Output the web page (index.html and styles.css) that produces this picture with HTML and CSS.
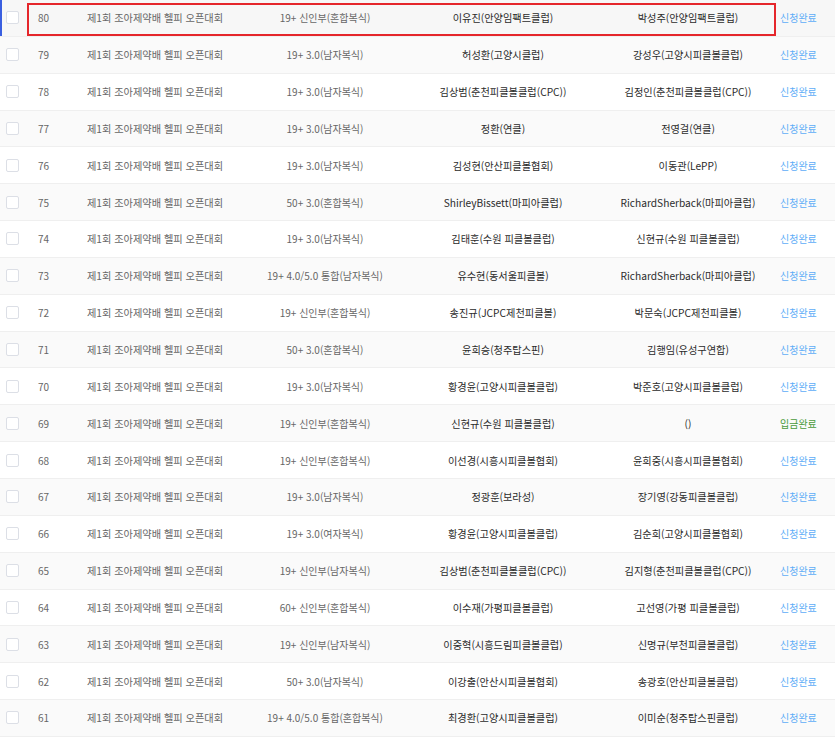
FILE: index.html
```html
<!DOCTYPE html>
<html lang="ko">
<head>
<meta charset="utf-8">
<title>신청 목록</title>
<link rel="stylesheet" href="styles.css">
</head>
<body>
<div class="table">
  <div class="row hover"><span class="cell chk"><span class="box"></span></span><span class="cell num">80</span><span class="cell name">제1회 조아제약배 헬피 오픈대회</span><span class="cell ev">19+ 신인부(혼합복식)</span><span class="cell p">이유진(안양임팩트클럽)</span><span class="cell p">박성주(안양임팩트클럽)</span><span class="cell st">신청완료</span><div class="mark"></div></div>
  <div class="row odd"><span class="cell chk"><span class="box"></span></span><span class="cell num">79</span><span class="cell name">제1회 조아제약배 헬피 오픈대회</span><span class="cell ev">19+ 3.0(남자복식)</span><span class="cell p">허성환(고양시클럽)</span><span class="cell p">강성우(고양시피클볼클럽)</span><span class="cell st">신청완료</span></div>
  <div class="row"><span class="cell chk"><span class="box"></span></span><span class="cell num">78</span><span class="cell name">제1회 조아제약배 헬피 오픈대회</span><span class="cell ev">19+ 3.0(남자복식)</span><span class="cell p">김상범(춘천피클볼클럽(CPC))</span><span class="cell p">김정인(춘천피클볼클럽(CPC))</span><span class="cell st">신청완료</span></div>
  <div class="row odd"><span class="cell chk"><span class="box"></span></span><span class="cell num">77</span><span class="cell name">제1회 조아제약배 헬피 오픈대회</span><span class="cell ev">19+ 3.0(남자복식)</span><span class="cell p">정환(연클)</span><span class="cell p">전영걸(연클)</span><span class="cell st">신청완료</span></div>
  <div class="row"><span class="cell chk"><span class="box"></span></span><span class="cell num">76</span><span class="cell name">제1회 조아제약배 헬피 오픈대회</span><span class="cell ev">19+ 3.0(남자복식)</span><span class="cell p">김성현(안산피클볼협회)</span><span class="cell p">이동관(LePP)</span><span class="cell st">신청완료</span></div>
  <div class="row odd"><span class="cell chk"><span class="box"></span></span><span class="cell num">75</span><span class="cell name">제1회 조아제약배 헬피 오픈대회</span><span class="cell ev">50+ 3.0(혼합복식)</span><span class="cell p">ShirleyBissett(마피아클럽)</span><span class="cell p">RichardSherback(마피아클럽)</span><span class="cell st">신청완료</span></div>
  <div class="row"><span class="cell chk"><span class="box"></span></span><span class="cell num">74</span><span class="cell name">제1회 조아제약배 헬피 오픈대회</span><span class="cell ev">19+ 3.0(남자복식)</span><span class="cell p">김태훈(수원 피클볼클럽)</span><span class="cell p">신현규(수원 피클볼클럽)</span><span class="cell st">신청완료</span></div>
  <div class="row odd"><span class="cell chk"><span class="box"></span></span><span class="cell num">73</span><span class="cell name">제1회 조아제약배 헬피 오픈대회</span><span class="cell ev">19+ 4.0/5.0 통합(남자복식)</span><span class="cell p">유수현(동서울피클볼)</span><span class="cell p">RichardSherback(마피아클럽)</span><span class="cell st">신청완료</span></div>
  <div class="row"><span class="cell chk"><span class="box"></span></span><span class="cell num">72</span><span class="cell name">제1회 조아제약배 헬피 오픈대회</span><span class="cell ev">19+ 신인부(혼합복식)</span><span class="cell p">송진규(JCPC제천피클볼)</span><span class="cell p">박문숙(JCPC제천피클볼)</span><span class="cell st">신청완료</span></div>
  <div class="row odd"><span class="cell chk"><span class="box"></span></span><span class="cell num">71</span><span class="cell name">제1회 조아제약배 헬피 오픈대회</span><span class="cell ev">50+ 3.0(혼합복식)</span><span class="cell p">윤희승(청주탑스핀)</span><span class="cell p">김행임(유성구연합)</span><span class="cell st">신청완료</span></div>
  <div class="row"><span class="cell chk"><span class="box"></span></span><span class="cell num">70</span><span class="cell name">제1회 조아제약배 헬피 오픈대회</span><span class="cell ev">19+ 3.0(남자복식)</span><span class="cell p">황경윤(고양시피클볼클럽)</span><span class="cell p">박준호(고양시피클볼클럽)</span><span class="cell st">신청완료</span></div>
  <div class="row odd"><span class="cell chk"><span class="box"></span></span><span class="cell num">69</span><span class="cell name">제1회 조아제약배 헬피 오픈대회</span><span class="cell ev">19+ 신인부(혼합복식)</span><span class="cell p">신현규(수원 피클볼클럽)</span><span class="cell p">()</span><span class="cell st paid">입금완료</span></div>
  <div class="row"><span class="cell chk"><span class="box"></span></span><span class="cell num">68</span><span class="cell name">제1회 조아제약배 헬피 오픈대회</span><span class="cell ev">19+ 신인부(혼합복식)</span><span class="cell p">이선경(시흥시피클볼협회)</span><span class="cell p">윤희중(시흥시피클볼협회)</span><span class="cell st">신청완료</span></div>
  <div class="row odd"><span class="cell chk"><span class="box"></span></span><span class="cell num">67</span><span class="cell name">제1회 조아제약배 헬피 오픈대회</span><span class="cell ev">19+ 3.0(남자복식)</span><span class="cell p">정광훈(보라성)</span><span class="cell p">장기영(강동피클볼클럽)</span><span class="cell st">신청완료</span></div>
  <div class="row"><span class="cell chk"><span class="box"></span></span><span class="cell num">66</span><span class="cell name">제1회 조아제약배 헬피 오픈대회</span><span class="cell ev">19+ 3.0(여자복식)</span><span class="cell p">황경윤(고양시피클볼클럽)</span><span class="cell p">김순희(고양시피클볼협회)</span><span class="cell st">신청완료</span></div>
  <div class="row odd"><span class="cell chk"><span class="box"></span></span><span class="cell num">65</span><span class="cell name">제1회 조아제약배 헬피 오픈대회</span><span class="cell ev">19+ 신인부(남자복식)</span><span class="cell p">김상범(춘천피클볼클럽(CPC))</span><span class="cell p">김지형(춘천피클볼클럽(CPC))</span><span class="cell st">신청완료</span></div>
  <div class="row"><span class="cell chk"><span class="box"></span></span><span class="cell num">64</span><span class="cell name">제1회 조아제약배 헬피 오픈대회</span><span class="cell ev">60+ 신인부(혼합복식)</span><span class="cell p">이수재(가평피클볼클럽)</span><span class="cell p">고선영(가평 피클볼클럽)</span><span class="cell st">신청완료</span></div>
  <div class="row odd"><span class="cell chk"><span class="box"></span></span><span class="cell num">63</span><span class="cell name">제1회 조아제약배 헬피 오픈대회</span><span class="cell ev">19+ 신인부(남자복식)</span><span class="cell p">이중혁(시흥드림피클볼클럽)</span><span class="cell p">신명규(부천피클볼클럽)</span><span class="cell st">신청완료</span></div>
  <div class="row"><span class="cell chk"><span class="box"></span></span><span class="cell num">62</span><span class="cell name">제1회 조아제약배 헬피 오픈대회</span><span class="cell ev">50+ 3.0(남자복식)</span><span class="cell p">이강출(안산시피클볼협회)</span><span class="cell p">송광호(안산피클볼클럽)</span><span class="cell st">신청완료</span></div>
  <div class="row odd"><span class="cell chk"><span class="box"></span></span><span class="cell num">61</span><span class="cell name">제1회 조아제약배 헬피 오픈대회</span><span class="cell ev">19+ 4.0/5.0 통합(혼합복식)</span><span class="cell p">최경환(고양시피클볼클럽)</span><span class="cell p">이미순(청주탑스핀클럽)</span><span class="cell st">신청완료</span></div>
</div>
</body>
</html>
```

FILE: styles.css
```css
html, body {
  margin: 0;
  padding: 0;
  background: #ffffff;
}
body {
  font-family: "Noto Sans CJK KR", "Noto Sans", sans-serif;
  width: 835px;
  height: 737px;
  overflow: hidden;
}
.table {
  display: flex;
  flex-direction: column;
}
.row {
  position: relative;
  display: grid;
  grid-template-columns: 28px 59px 163px 150px 206px 164px 65px;
  align-items: center;
  height: 36.85px;
  box-sizing: border-box;
  border-bottom: 1px solid #efefef;
  background: #ffffff;
}
.row.odd {
  background: #fafafa;
}
.row.hover {
  background: #f7f7f7;
  box-shadow: inset 2px 0 0 #3a5fe0;
}
.cell {
  white-space: nowrap;
  font-size: 10px;
  color: #666666;
}
.chk {
  display: flex;
  align-items: center;
  padding-left: 6px;
}
.box {
  width: 11px;
  height: 11px;
  border: 1px solid #dcdfe6;
  border-radius: 2px;
  background: #fff;
}
.num {
  padding-left: 10px;
}
.name {
  font-size: 10.2px;
}
.ev {
  text-align: center;
}
.p {
  text-align: center;
  font-size: 10.2px;
  color: #2b2b2b;
}
.st {
  padding-left: 10px;
  color: #5eadf7;
}
.st.paid {
  color: #4a9a3c;
}
.mark {
  position: absolute;
  left: 27px;
  top: 3px;
  width: 749px;
  height: 33px;
  box-sizing: border-box;
  border: 2px solid #e5262b;
  pointer-events: none;
}
```
